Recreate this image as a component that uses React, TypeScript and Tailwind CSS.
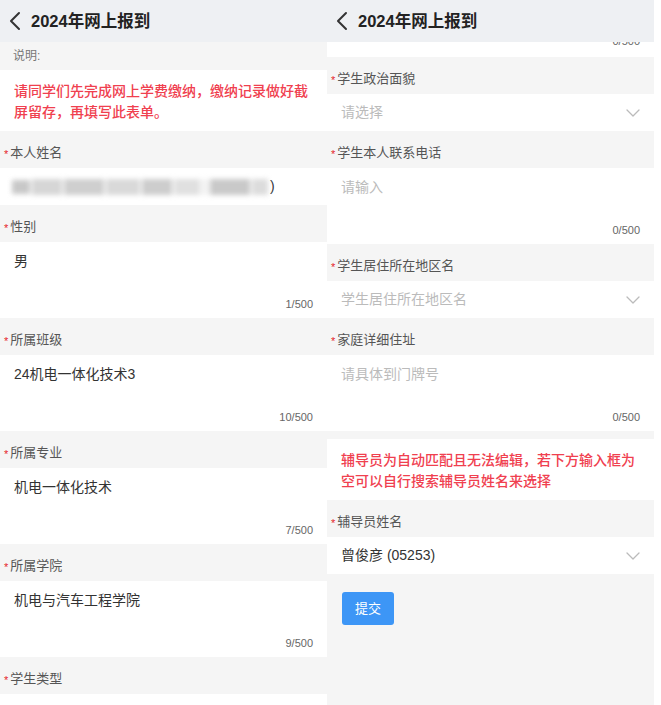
const font = { fontFamily: '"Liberation Sans", "Noto Sans CJK SC", sans-serif' };

const BackIcon = () => (
  <svg width="14" height="20" viewBox="0 0 14 20" fill="none" stroke="#333" strokeWidth="2" strokeLinecap="round" strokeLinejoin="round">
    <path d="M11 2 3 10l8 8" />
  </svg>
);

const DownIcon = () => (
  <svg width="14" height="8" viewBox="0 0 14 8" fill="none" stroke="#bbb" strokeWidth="1.3" strokeLinecap="round" strokeLinejoin="round">
    <path d="M1 1l6 6 6-6" />
  </svg>
);

const Header = () => (
  <div className="flex h-[42px] shrink-0 items-center bg-[#eef0f3] pl-[8px]">
    <BackIcon />
    <span className="ml-[9px] text-[16.5px] font-bold text-[#222]">2024年网上报到</span>
  </div>
);

const Label = ({ text }: { text: string }) => (
  <div className="flex h-[37px] shrink-0 items-end bg-[#f5f5f5] pb-[6px] pl-[4px] text-[13px] leading-[18px] text-[#555]">
    <span className="mr-[2px] text-[11px] leading-[16px] text-[#e5242b]">*</span>
    {text}
  </div>
);

const TextArea = ({ value, placeholder, count }: { value?: string; placeholder?: string; count: string }) => (
  <div className="flex h-[76px] shrink-0 flex-col bg-white px-[14px] pt-[9px]">
    <div className={`text-[14px] leading-[20px] ${value ? 'text-[#333]' : 'text-[#bbb]'}`}>{value ?? placeholder}</div>
    <div className="mt-auto mb-[7px] text-right text-[11px] leading-[14px] text-[#666]">{count}</div>
  </div>
);

const Select = ({ value, placeholder }: { value?: string; placeholder?: string }) => (
  <div className="flex h-[37px] shrink-0 items-center justify-between bg-white pl-[14px] pr-[14px]">
    <span className={`text-[14px] ${value ? 'text-[#333]' : 'text-[#bbb]'}`}>{value ?? placeholder}</span>
    <DownIcon />
  </div>
);

const RedNote = ({ lines }: { lines: string[] }) => (
  <div className="shrink-0 bg-white px-[14px] pt-[11px] pb-[8px] text-[14px] font-medium leading-[21px] text-[#f0404f]">
    {lines.map((l) => (
      <div key={l}>{l}</div>
    ))}
  </div>
);

const BlurredName = () => (
  <div className="flex h-[37px] shrink-0 items-center bg-white pl-[12px]">
    <div className="flex h-[18px] items-center gap-[2px] blur-[2.5px]">
      <div className="h-[14px] w-[18px] bg-[#c8c8c8]" />
      <div className="h-[16px] w-[30px] bg-[#d6d6d6]" />
      <div className="h-[16px] w-[40px] bg-[#cfcfcf]" />
      <div className="h-[16px] w-[34px] bg-[#d9d9d9]" />
      <div className="h-[16px] w-[30px] bg-[#cdcdcd]" />
      <div className="h-[16px] w-[26px] bg-[#e0e0e0]" />
      <div className="h-[16px] w-[6px] bg-[#f0f0f0]" />
      <div className="h-[16px] w-[40px] bg-[#c9c9c9]" />
      <div className="h-[16px] w-[16px] bg-[#dcdcdc]" />
    </div>
    <span className="ml-[2px] text-[14px] text-[#333]">)</span>
  </div>
);

const LeftPanel = () => (
  <div className="flex h-[705px] w-[327px] shrink-0 flex-col overflow-hidden bg-[#f5f5f5]">
    <Header />
    <div className="flex h-[28px] shrink-0 items-center bg-[#f5f5f5] pl-[13px] text-[12px] text-[#777]">说明:</div>
    <RedNote lines={['请同学们先完成网上学费缴纳，缴纳记录做好截', '屏留存，再填写此表单。']} />
    <Label text="本人姓名" />
    <BlurredName />
    <Label text="性别" />
    <TextArea value="男" count="1/500" />
    <Label text="所属班级" />
    <TextArea value="24机电一体化技术3" count="10/500" />
    <Label text="所属专业" />
    <TextArea value="机电一体化技术" count="7/500" />
    <Label text="所属学院" />
    <TextArea value="机电与汽车工程学院" count="9/500" />
    <Label text="学生类型" />
    <div className="h-[40px] shrink-0 bg-white" />
  </div>
);

const RightPanel = () => (
  <div className="flex h-[705px] w-[327px] shrink-0 flex-col overflow-hidden bg-[#f5f5f5]">
    <Header />
    <div className="h-[15px] shrink-0 overflow-hidden bg-white px-[14px]">
      <div className="-mt-[8px] text-right text-[11px] leading-[14px] text-[#666]">0/500</div>
    </div>
    <Label text="学生政治面貌" />
    <Select placeholder="请选择" />
    <Label text="学生本人联系电话" />
    <TextArea placeholder="请输入" count="0/500" />
    <Label text="学生居住所在地区名" />
    <Select placeholder="学生居住所在地区名" />
    <Label text="家庭详细住址" />
    <TextArea placeholder="请具体到门牌号" count="0/500" />
    <div className="h-[8px] shrink-0" />
    <RedNote lines={['辅导员为自动匹配且无法编辑，若下方输入框为', '空可以自行搜索辅导员姓名来选择']} />
    <Label text="辅导员姓名" />
    <Select value="曾俊彦 (05253)" />
    <div className="pl-[15px] pt-[18px]">
      <button className="h-[33px] w-[52px] rounded-[3px] bg-[#3d96f6] text-[13px] text-white">提交</button>
    </div>
  </div>
);

export default function App() {
  return (
    <div className="flex h-[705px] w-[661px] overflow-hidden bg-white" style={font}>
      <LeftPanel />
      <RightPanel />
    </div>
  );
}
